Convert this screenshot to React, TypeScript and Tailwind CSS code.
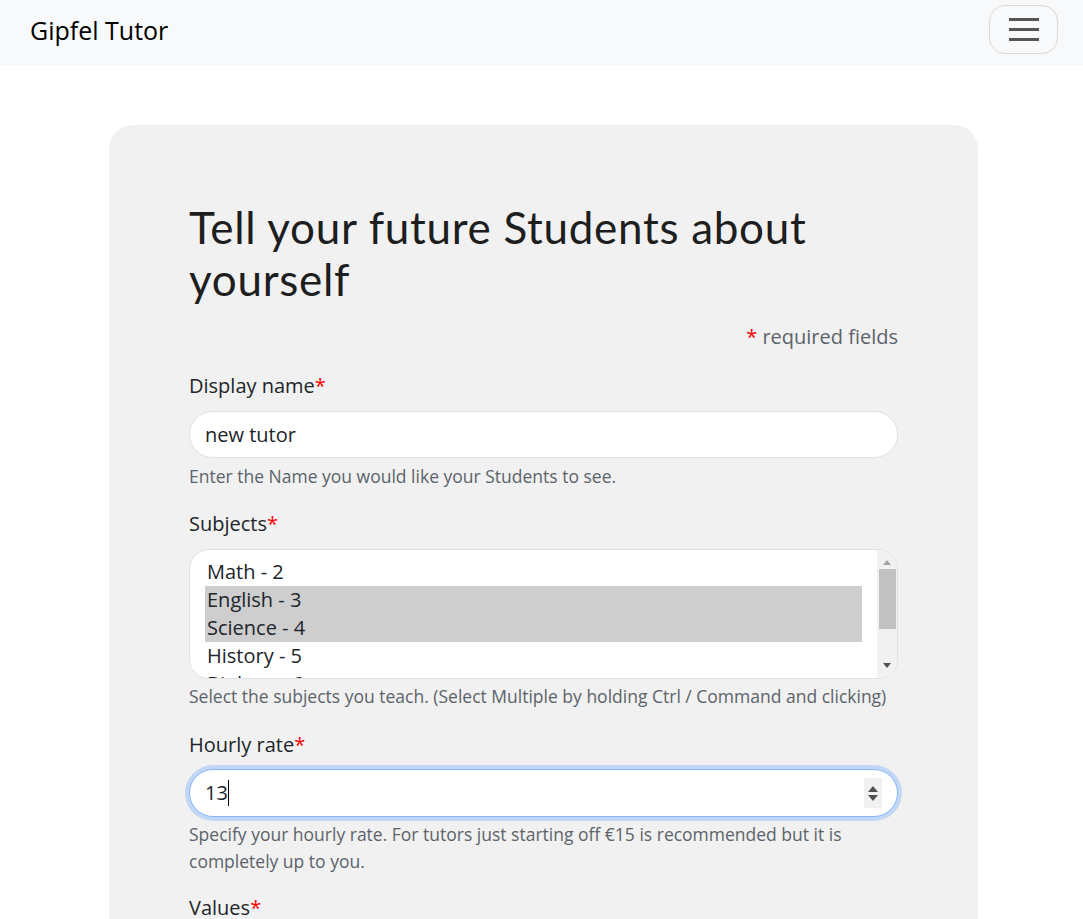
import React from 'react';

const subjects = [
  { name: 'Math - 2', selected: false },
  { name: 'English - 3', selected: true },
  { name: 'Science - 4', selected: true },
  { name: 'History - 5', selected: false },
  { name: 'Biology - 6', selected: false },
];

const Req = () => <span className="text-[#ff0000]">*</span>;

const App: React.FC = () => {
  return (
    <div className="min-h-[919px] bg-white font-['Open_Sans',sans-serif] text-[#212529]">
      <nav className="h-[65px] bg-[#f8f9fa] flex items-center justify-between pl-[30px] pr-[25px]">
        <span className="text-[25px] leading-none text-black -mt-[4px]">Gipfel Tutor</span>
        <button className="w-[69px] h-[49px] rounded-[16px] border border-[#d9d9d9] flex flex-col items-center justify-center gap-[7px] -mt-[6px]">
          <span className="block w-[30px] h-[3px] bg-[#555]" />
          <span className="block w-[30px] h-[3px] bg-[#555]" />
          <span className="block w-[30px] h-[3px] bg-[#555]" />
        </button>
      </nav>

      <div className="pl-[109px] pt-[60px]">
        <div className="w-[869px] bg-[#f1f1f1] rounded-[24px] px-[80px] pt-[76px] pb-10">
          <h1 className="font-['Lato',sans-serif] text-[44px] leading-[52px] tracking-[0.7px] text-[#1e1e1e]">
            Tell your future Students about yourself
          </h1>
          <p className="text-right text-[20px] leading-[27px] text-[#5c636a] mt-[18px] mb-[21px]">
            <Req /> required fields
          </p>

          <div className="mb-[19px]">
            <label className="block text-[20px] leading-[30px] mb-[10px]">
              Display name<Req />
            </label>
            <div className="h-[47px] rounded-full bg-white border border-[#dee2e6] flex items-center px-[15px] text-[20px]">
              new tutor
            </div>
            <p className="mt-[5px] text-[17.5px] leading-[27px] text-[#5c636a]">
              Enter the Name you would like your Students to see.
            </p>
          </div>

          <div className="mb-[20px]">
            <label className="block text-[20px] leading-[30px] mb-[10px]">
              Subjects<Req />
            </label>
            <div className="h-[130px] rounded-[20px] bg-white border border-[#dee2e6] flex overflow-hidden">
              <div className="flex-1 pl-[15px] pr-[15px] pt-[8px]">
                {subjects.map((s) => (
                  <div
                    key={s.name}
                    className={`h-[28px] leading-[28px] text-[20px] pl-[2px] ${s.selected ? 'bg-[#cecece]' : ''}`}
                  >
                    {s.name}
                  </div>
                ))}
              </div>
              <div className="w-[20px] bg-[#f1f1f1] flex flex-col items-center">
                <svg width="10" height="14" viewBox="0 0 10 14" className="mt-[5px]">
                  <path d="M1 10 L5 5 L9 10 Z" fill="#a3a3a3" />
                </svg>
                <div className="w-[17px] h-[60px] bg-[#c1c1c1]" />
                <div className="flex-1" />
                <svg width="10" height="14" viewBox="0 0 10 14" className="mb-[5px]">
                  <path d="M1 4 L5 9 L9 4 Z" fill="#505050" />
                </svg>
              </div>
            </div>
            <p className="mt-[4px] text-[17.5px] leading-[27px] text-[#5c636a]">
              Select the subjects you teach. (Select Multiple by holding Ctrl / Command and clicking)
            </p>
          </div>

          <div className="mb-[18px]">
            <label className="block text-[20px] leading-[30px] mb-[9px]">
              Hourly rate<Req />
            </label>
            <div className="h-[48px] rounded-full bg-white border border-[#86b7fe] ring-4 ring-[#c2d6f5] flex items-center pl-[15px] pr-[15px] text-[20px]">
              <span>13</span>
              <span className="inline-block w-[1px] h-[26px] bg-black" />
              <div className="flex-1" />
              <div className="w-[18px] h-[30px] bg-[#f1f1f1] flex flex-col items-center justify-center gap-[3px]">
                <svg width="10" height="6" viewBox="0 0 10 6">
                  <path d="M0 6 L5 0 L10 6 Z" fill="#505050" />
                </svg>
                <svg width="10" height="6" viewBox="0 0 10 6">
                  <path d="M0 0 L5 6 L10 0 Z" fill="#505050" />
                </svg>
              </div>
            </div>
            <p className="mt-[4px] text-[17.5px] leading-[27px] text-[#5c636a]">
              Specify your hourly rate. For tutors just starting off €15 is recommended but it is completely up to you.
            </p>
          </div>

          <div>
            <label className="block text-[20px] leading-[30px] mb-[10px]">
              Values<Req />
            </label>
            <div className="h-[120px] rounded-[20px] bg-white border border-[#dee2e6]" />
          </div>
        </div>
      </div>
    </div>
  );
};

export default App;
